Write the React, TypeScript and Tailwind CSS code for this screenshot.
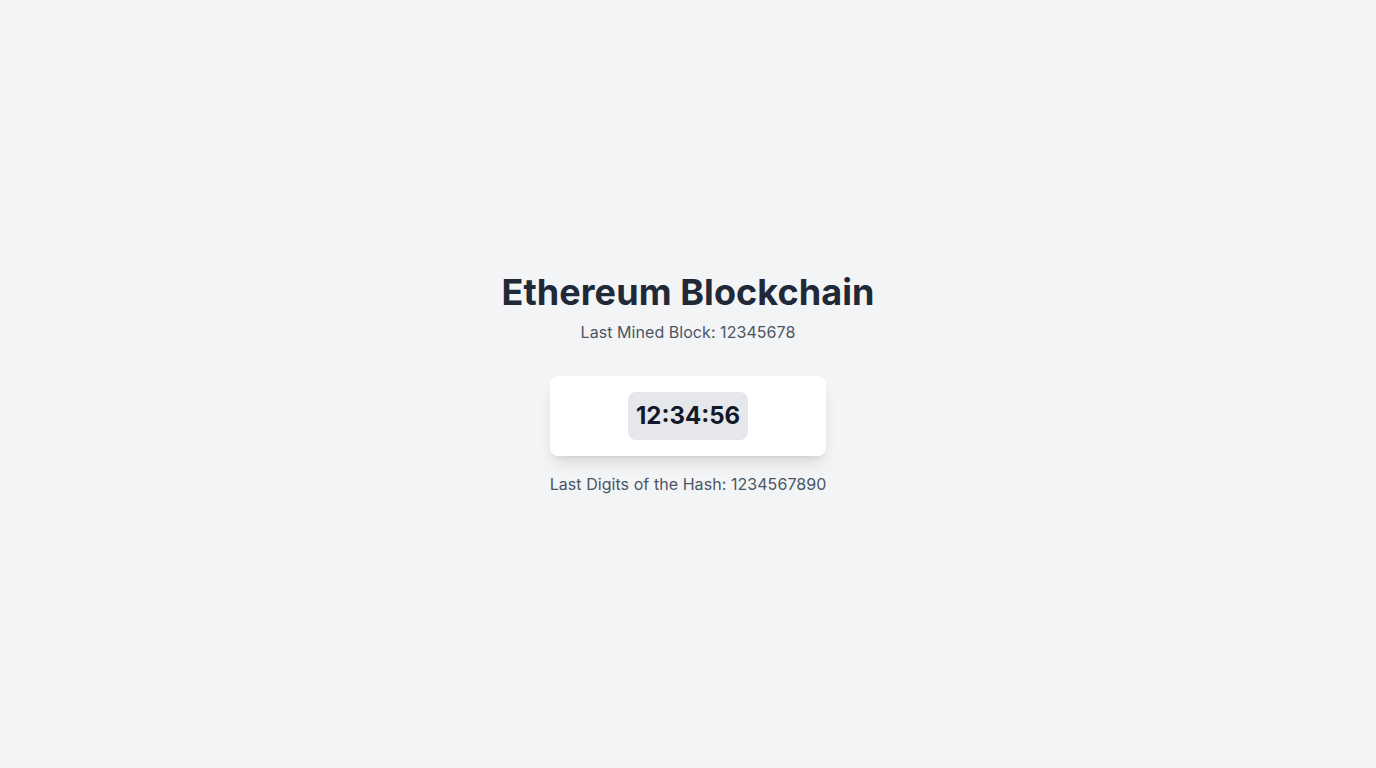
export default function App() {
  return (
    <div className="flex min-h-screen flex-col items-center justify-center bg-[#f3f4f6] font-['Inter',sans-serif]">
      <header className="mb-8 text-center">
        <h1 className="mb-2 text-4xl font-bold tracking-[0.08px] text-[#1f2937]">Ethereum Blockchain</h1>
        <p className="text-base tracking-[0.05px] text-[#4b5563]">Last Mined Block: 12345678</p>
      </header>
      <main>
        <div className="flex items-center justify-center rounded-lg bg-white p-4 shadow-lg">
          <div className="rounded-lg bg-[#e5e7eb] p-2 text-2xl font-bold text-[#111827]">12:34:56</div>
        </div>
        <p className="mt-4 text-center text-base tracking-[0.06px] text-[#4b5563]">Last Digits of the Hash: 1234567890</p>
      </main>
    </div>
  );
}
